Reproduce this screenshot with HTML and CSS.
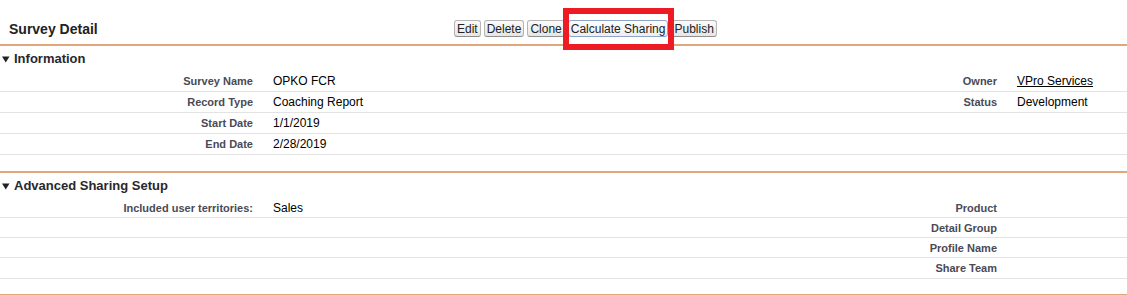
FILE: index.html
```html
<!doctype html>
<html lang="en">
<head>
	<meta charset="utf-8">
	<title>Survey Detail</title>
	<link rel="stylesheet" href="styles.css">
</head>
<body>
	<div class="pb-header">
		<h2 class="pb-title">Survey Detail</h2>
		<div class="pb-buttons">
			<button class="btn">Edit</button>
			<button class="btn">Delete</button>
			<button class="btn">Clone</button>
			<span class="btn-wrap">
				<button class="btn btn-focus">Calculate Sharing</button>
				<span class="highlight"></span>
			</span>
			<button class="btn">Publish</button>
		</div>
	</div>

	<div class="section">
		<h3 class="section-title">
			<svg class="twist" width="8" height="7" viewBox="0 0 8 7"><path d="M0 0.5 L7.5 0.5 L3.75 6.5 Z" fill="#222"/></svg>
			Information
		</h3>
		<div class="row">
			<div class="label">Survey Name</div>
			<div class="value">OPKO FCR</div>
			<div class="label">Owner</div>
			<div class="value"><a href="#">VPro Services</a></div>
		</div>
		<div class="row">
			<div class="label">Record Type</div>
			<div class="value">Coaching Report</div>
			<div class="label">Status</div>
			<div class="value">Development</div>
		</div>
		<div class="row">
			<div class="label">Start Date</div>
			<div class="value">1/1/2019</div>
			<div class="label"></div>
			<div class="value"></div>
		</div>
		<div class="row">
			<div class="label">End Date</div>
			<div class="value">2/28/2019</div>
			<div class="label"></div>
			<div class="value"></div>
		</div>
	</div>

	<div class="section section-last">
		<h3 class="section-title">
			<svg class="twist" width="8" height="7" viewBox="0 0 8 7"><path d="M0 0.5 L7.5 0.5 L3.75 6.5 Z" fill="#222"/></svg>
			Advanced Sharing Setup
		</h3>
		<div class="row compact">
			<div class="label">Included user territories:</div>
			<div class="value">Sales</div>
			<div class="label">Product</div>
			<div class="value"></div>
		</div>
		<div class="row compact">
			<div class="label"></div>
			<div class="value"></div>
			<div class="label">Detail Group</div>
			<div class="value"></div>
		</div>
		<div class="row compact">
			<div class="label"></div>
			<div class="value"></div>
			<div class="label">Profile Name</div>
			<div class="value"></div>
		</div>
		<div class="row">
			<div class="label"></div>
			<div class="value"></div>
			<div class="label">Share Team</div>
			<div class="value"></div>
		</div>
	</div>
</body>
</html>
```

FILE: styles.css
```css
body {
	margin: 0;
	font-family: "Liberation Sans", Arial, sans-serif;
	font-size: 12px;
	color: #000;
	background: #fff;
}
.pb-header {
	display: flex;
	align-items: center;
	padding: 20px 0 7px 0;
	border-bottom: 2px solid #e2a67c;
}
.pb-title {
	flex: 0 0 454px;
	box-sizing: border-box;
	margin: 0;
	padding-left: 9px;
	font-size: 14px;
	font-weight: bold;
	color: #222;
}
.pb-buttons {
	display: flex;
	gap: 3px;
}
.btn {
	font-family: "Liberation Sans", Arial, sans-serif;
	font-size: 12px;
	color: #222;
	height: 17px;
	line-height: 14px;
	padding: 0 2px;
	border: 1px solid #b5b5b5;
	border-bottom-color: #8f8f8f;
	border-radius: 3px;
	background: linear-gradient(#fafafa, #e6e6e6);
	margin: 0;
}
.btn-focus {
	border-color: #8ea4c9;
	background: linear-gradient(#fbfcfe, #eceef2);
}
.btn-wrap {
	position: relative;
	display: inline-flex;
}
.highlight {
	position: absolute;
	top: -12px;
	left: -5px;
	width: 111px;
	height: 42px;
	box-sizing: border-box;
	border: 6px solid #ed1c24;
}
.section {
	padding-bottom: 16px;
	border-bottom: 2px solid #e2a67c;
}
.section-last {
	padding-bottom: 15px;
}
.section-title {
	display: flex;
	align-items: center;
	gap: 4px;
	height: 25px;
	margin: 0;
	padding-left: 2px;
	font-size: 13px;
	font-weight: bold;
	color: #27282e;
}
.twist {
	margin-top: 1px;
}
.row {
	display: grid;
	grid-template-columns: 263px 1fr 1fr 120px;
	align-items: center;
	height: 20px;
	border-bottom: 1px solid #e3e3e3;
}
.row.compact {
	height: 19px;
}
.label {
	padding-right: 10px;
	text-align: right;
	font-size: 11px;
	font-weight: bold;
	color: #4a4a56;
	white-space: nowrap;
}
.value {
	padding-left: 10px;
	white-space: nowrap;
}
.value a {
	color: #000;
	text-decoration: underline;
}
```
